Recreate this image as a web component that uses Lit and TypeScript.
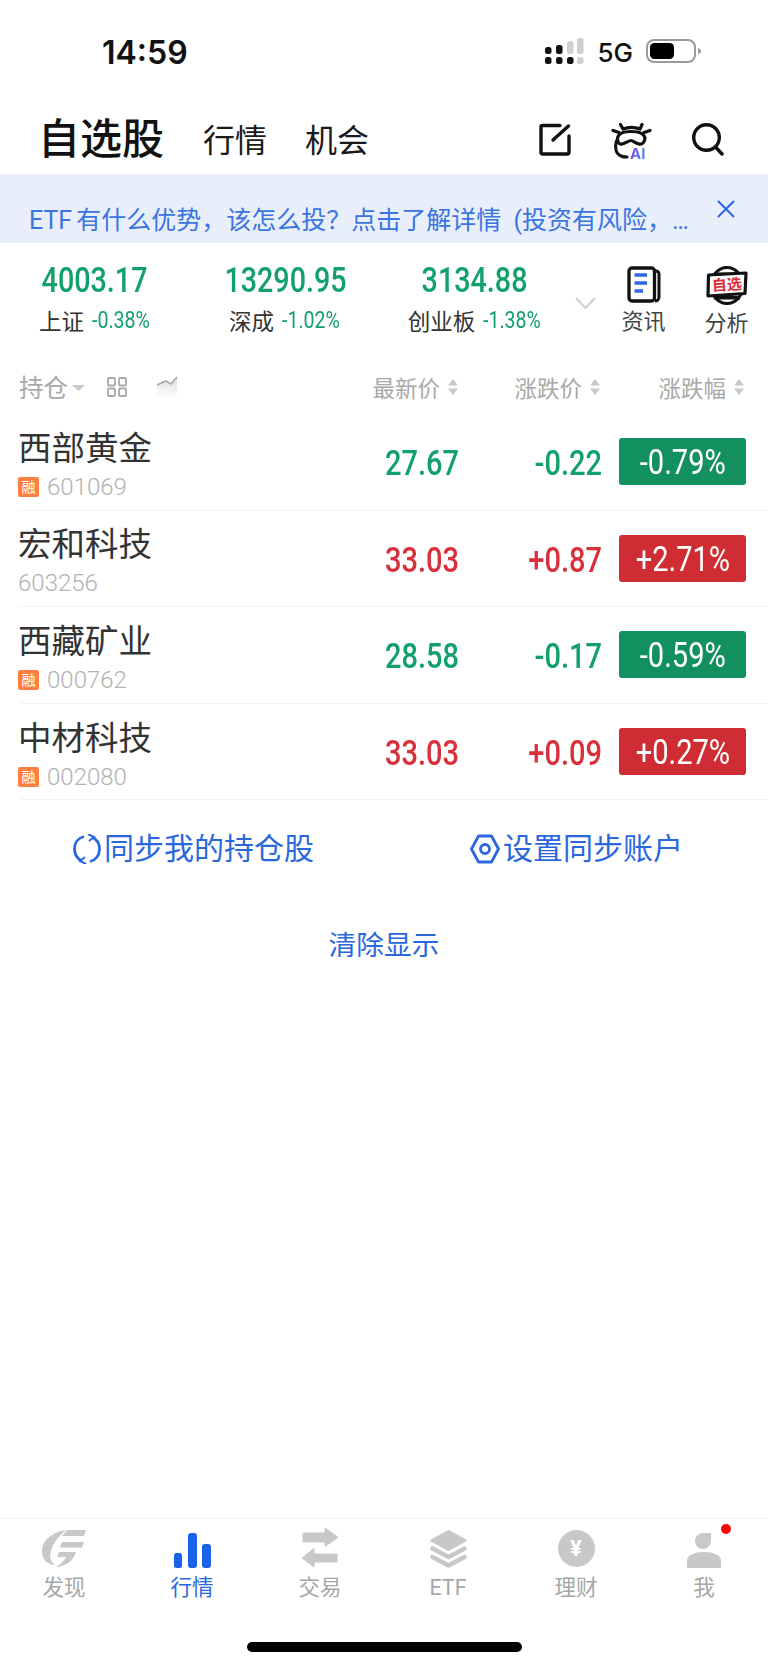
import { LitElement, html, css, svg } from "lit";
import { customElement } from "lit/decorators.js";

const rows = [
  { name: "西部黄金", code: "601069", rong: true, price: "27.67", chg: "-0.22", pct: "-0.79%", up: false },
  { name: "宏和科技", code: "603256", rong: false, price: "33.03", chg: "+0.87", pct: "+2.71%", up: true },
  { name: "西藏矿业", code: "000762", rong: true, price: "28.58", chg: "-0.17", pct: "-0.59%", up: false },
  { name: "中材科技", code: "002080", rong: true, price: "33.03", chg: "+0.09", pct: "+0.27%", up: true },
];

const indices = [
  { v: "4003.17", n: "上证", p: "-0.38%" },
  { v: "13290.95", n: "深成", p: "-1.02%" },
  { v: "3134.88", n: "创业板", p: "-1.38%" },
];

const sortIcon = html`<svg class="sort" width="10" height="16" viewBox="0 0 10 16"><path d="M5 0 10 6.500H0z M5 16 0 9.500H10z" fill="#c9c9c9"/></svg>`;

const tabIcons: Record<string, unknown> = {
  find: svg`<path d="M24 0C10 2 0 11 0 21 0 30 6 35 13 35 9 32 7 27 9 21 11 13 17 6 24 0z" fill="#c8c8c8"/>
    <path d="M25 0H44L42 6H20z M20 12H42L40 17.500H18z M17 22H34C32 30 25 36 14 37 19 34 22 31 24 27H15z" fill="#c8c8c8"/>`,
  quote: svg`<rect x="0" y="20" width="8" height="15" rx="2.500" fill="#1a62e8"/><rect x="14" y="0" width="9" height="35" rx="3" fill="#1a62e8"/><rect x="28" y="11" width="9" height="24" rx="3" fill="#1a62e8"/>`,
  trade: svg`<path d="M1 5H23V0L36 9.300 23 18.500V14H1z M35 26H12V20.500L0 30 12 39V34H35z" fill="#c8c8c8" stroke="#c8c8c8" stroke-width="1" stroke-linejoin="round"/>`,
  etf: svg`<path d="M18.500 1.500 35 10.500 18.500 19.500 2 10.500z" fill="#c8c8c8" stroke="#c8c8c8" stroke-width="3" stroke-linejoin="round"/>
    <path d="M2.500 18.500 18.500 27 34.500 18.500M2.500 27 18.500 35.500 34.500 27" fill="none" stroke="#c8c8c8" stroke-width="4.600" stroke-linecap="round" stroke-linejoin="round"/>`,
  user: svg`<path d="M24 1V9A8 8 0 1 1 16 1z" fill="#c8c8c8"/>
    <path d="M0 36V28C0 23 8 20 17 20S34 23 34 28V36z" fill="#c8c8c8"/>`,
};

const tabs = [
  { k: "find", t: "发现", w: 44, h: 38 },
  { k: "quote", t: "行情", w: 37, h: 35, active: true },
  { k: "trade", t: "交易", w: 36, h: 40 },
  { k: "etf", t: "ETF", w: 37, h: 38 },
  { k: "money", t: "理财", w: 37, h: 37 },
  { k: "user", t: "我", w: 34, h: 36 },
];

@customElement("app-root")
export class AppRoot extends LitElement {
  static styles = css`
    :host {
      display: flex;
      flex-direction: column;
      width: 768px;
      height: 1667px;
      background: #fff;
      font-family: Roboto, "Noto Sans CJK SC", sans-serif;
      color: #222;
      overflow: hidden;
    }
    svg { display: block; flex: none; }

    .status { height: 100px; display: flex; align-items: center; padding: 0 66px 0 102px; box-sizing: border-box; }
    .time { font-family: Inter, sans-serif; font-weight: 600; font-size: 32px; color: #111; line-height: 1; margin-top: 5px; }
    .status-right { margin-left: auto; display: flex; align-items: center; margin-top: 2px; }
    .fiveg { font-family: Inter, sans-serif; font-weight: 500; font-size: 26px; color: #111; margin: 3px 13px 0 13px; line-height: 1; }

    .head { height: 74px; display: flex; align-items: center; padding: 5px 44px 0 38px; box-sizing: border-box; }
    .title { font-size: 42px; font-weight: 500; color: #111; line-height: 1; margin-right: 39px; }
    .tab { font-size: 32px; color: #1a1a1a; line-height: 1; margin: 2px 38px 0 0; }
    .head-icons { margin-left: auto; display: flex; align-items: flex-start; gap: 40px; height: 36px; margin-top: 2px; }

    .banner { height: 69px; background: #e8effb; display: flex; justify-content: space-between; padding: 0 33px 0 29px; box-sizing: border-box; color: #3b74e0; }
    .banner-text { font-size: 25px; line-height: 30px; padding-top: 32px; white-space: nowrap; }
    .banner-etf { margin-right: 4px; }
    .banner-paren { margin-left: 6px; }
    .banner-close { margin-top: 26px; }

    .idx-strip { height: 122px; display: grid; grid-template-columns: 190px 190px 190px 32px 83px 83px; box-sizing: border-box; padding-top: 21px; }
    .idx { display: flex; flex-direction: column; align-items: center; }
    .idx-v { font-size: 35px; font-weight: 500; color: #12a06b; line-height: 34px; transform: scaleX(.82); }
    .idx-l { display: flex; align-items: center; gap: 8px; margin-top: 9px; height: 26px; }
    .idx-n { font-size: 22.500px; color: #333; }
    .idx-p { width: 59px; font-size: 23px; color: #12a06b; white-space: nowrap; transform: scaleX(.85); transform-origin: left center; }
    .chev { padding: 33px 0 0 5px; }
    .tool { display: flex; flex-direction: column; align-items: center; margin-top: 2px; }
    .tool-t { font-size: 22px; color: #444; line-height: 26px; margin-top: 6px; }

    .thead { height: 49px; display: flex; align-items: center; padding: 0 24px 6px 20px; color: #a9a9a9; font-size: 22.500px; box-sizing: border-box; }
    .th-left { display: flex; align-items: center; flex: 1; }
    .th-hold { font-size: 24.500px; margin-left: -1px; }
    .th-tri { margin: 2px 0 0 4px; }
    .th-grid { margin-left: 22px; }
    .th-chart { margin-left: 30px; }
    .th { display: flex; align-items: center; justify-content: flex-end; gap: 8px; }
    .th-w { width: 142px; }
    .th-x { width: 144px; }

    .row { height: 96.600px; margin-left: 20px; border-bottom: 1px solid #f3f3f3; box-sizing: border-box; display: flex; align-items: center; padding-right: 22px; }
    .info { flex: 1; margin: 12px 0 0 -2px; display: flex; flex-direction: column; }
    .name { font-size: 33.500px; line-height: 38px; color: #333; margin-top: -7px; }
    .code-line { display: flex; align-items: center; gap: 8px; margin-top: 7px; height: 24px; }
    .rong { width: 21px; height: 20px; background: #ff8040; color: #fff; font-size: 14px; line-height: 20px; text-align: center; border-radius: 2px; }
    .code { font-size: 24px; color: #b2b2b2; font-weight: 300; line-height: 24px; }
    .price, .chg { font-size: 35px; font-weight: 500; text-align: right; margin-top: 4px; transform: scaleX(.83); transform-origin: right center; }
    .price { width: 100px; }
    .chg { width: 143px; }
    .up { color: #d9303c; }
    .down { color: #12a06b; }
    .badge { width: 127px; height: 47px; margin-left: 17px; border-radius: 3px; color: #fff; font-size: 35px; line-height: 49px; text-align: center; }
    .badge span { display: inline-block; transform: scaleX(.83); }
    .badge.up { background: #cf2d33; color: #fff; }
    .badge.down { background: #12915e; color: #fff; }

    .sync { display: flex; color: #2a67de; font-size: 30px; line-height: 32px; padding: 33px 0 0 73px; }
    .sync-item { display: flex; align-items: center; gap: 3px; }
    .sync-b { margin-left: 156px; }
    .clear { text-align: center; color: #2a67de; font-size: 27.700px; line-height: 32px; margin-top: 65px; }

    .spacer { flex: 1; }
    .tabs { border-top: 1px solid #f2f2f2; display: grid; grid-template-columns: repeat(6, 128px); height: 124px; box-sizing: border-box; }
    .tabitem { display: flex; flex-direction: column; align-items: center; font-size: 21.500px; color: #a6a6a6; }
    .tabitem.active { color: #2a67de; }
    .tab-ic { height: 49px; display: flex; align-items: flex-end; position: relative; }
    .tab-t { line-height: 26px; margin-top: 7px; }
    .dot { position: absolute; right: -10px; top: 5px; width: 10px; height: 10px; border-radius: 50%; background: #f00; }
    .money { position: relative; width: 37px; height: 37px; border-radius: 50%; background: #c8c8c8; color: #fff; font-weight: 700; font-size: 22px; line-height: 37px; text-align: center; margin-bottom: 1px; }
    .home-wrap { height: 25px; display: flex; justify-content: center; }
    .home { width: 275px; height: 10px; border-radius: 5px; background: #000; margin-left: 1px; }

    .ai-wrap { position: relative; width: 41px; height: 36px; }
    .ai { position: absolute; left: 19px; top: 23px; font-family: Inter, sans-serif; font-weight: 700; font-size: 15px; line-height: 15px;
      background: linear-gradient(90deg, #7a4fe8, #4f86f0); -webkit-background-clip: text; background-clip: text; color: transparent; }
    .ana { position: relative; width: 42px; height: 39px; }
    .ana-t { position: absolute; left: 5px; top: 10px; width: 32px; font-size: 15px; line-height: 18px; font-weight: 700; color: #e02c36; text-align: center; transform: rotate(-4deg); white-space: nowrap; }
  `;

  private signal() {
    const d = (x: number, y: number, h: number, c: string) => svg`<rect x=${x} y=${y} width="6.500" height=${h} rx="2.500" fill=${c}/>`;
    return html`<svg width="39" height="27" viewBox="0 0 39 27">
      ${d(0, 9, 7, "#111")}${d(11, 7, 9, "#111")}${d(22, 3, 13, "#d0d0d0")}${d(32, 0, 16, "#d0d0d0")}
      ${d(0, 19, 7, "#111")}${d(11, 19, 7, "#111")}${d(22, 19, 7, "#111")}${d(32, 19, 7, "#d0d0d0")}
    </svg>`;
  }

  private battery() {
    return html`<svg width="56" height="24" viewBox="0 0 56 24">
      <rect x="1" y="1" width="48" height="22" rx="7" fill="none" stroke="#9a9a9a" stroke-width="2"/>
      <rect x="4" y="4" width="24" height="16" rx="4.500" fill="#000"/>
      <path d="M52 9c2 .5 3 1.500 3 3s-1 2.500-3 3z" fill="#9a9a9a"/>
    </svg>`;
  }

  private headIcons() {
    return html`<div class="head-icons">
      <svg width="32" height="33" viewBox="0 0 32 33" fill="none" stroke="#111" stroke-width="3.400" stroke-linecap="round" stroke-linejoin="round">
        <path d="M21 2.500H3.500a1.500 1.500 0 0 0-1.500 1.500V29.500A1.500 1.500 0 0 0 3.500 31H28.500A1.500 1.500 0 0 0 30 29.500V13"/>
        <path d="M14 17 29.500 3"/>
      </svg>
      <div class="ai-wrap">
        <svg width="41" height="36" viewBox="0 0 41 36" fill="none" stroke="#111" stroke-width="3.200" stroke-linecap="round" stroke-linejoin="round">
          <path d="M9.500 1.500 12 6C17 4 24 4 29 6L31 1.500"/>
          <path d="M2 7.500 8 9.500M39 7.500 33 9.500"/>
          <path d="M6.500 15C7.500 10 13 8.500 20 8.500 27 8.500 33 10 34 15 34 19 31 22 28 21 24 20 22 17.500 20 17.500 18 17.500 15 20 11 21 8.500 22 6 19 6.500 15z"/>
          <path d="M5.500 18C3.500 25 5 31 10 33 12 34 14 34 16 34"/>
        </svg>
        <span class="ai">AI</span>
      </div>
      <svg width="32" height="33" viewBox="0 0 32 33" fill="none" stroke="#111" stroke-width="3.400" stroke-linecap="round">
        <circle cx="14.500" cy="14.500" r="12.800"/><path d="M24 24.500 30 31"/>
      </svg>
    </div>`;
  }

  private newsIcon() {
    return html`<svg width="34" height="37" viewBox="0 0 34 37">
      <path d="M27 5h2a3 3 0 0 1 3 3V31a4 4 0 0 1-4 4" fill="none" stroke="#111" stroke-width="3"/>
      <rect x="2" y="2" width="25.500" height="33" rx="3" fill="#fff" stroke="#111" stroke-width="3.300"/>
      <path d="M7.500 9H20M7.500 17H20M7.500 25H16" stroke="#2a67de" stroke-width="3.400" fill="none"/>
    </svg>`;
  }

  private anaIcon() {
    return html`<div class="ana">
      <svg width="42" height="39" viewBox="0 0 42 39">
        <ellipse cx="21" cy="19.500" rx="16" ry="18" fill="#fff" stroke="#111" stroke-width="3"/>
        <path d="M8 6.500H34V9H8zM8 30H34V33.500H8z" fill="#111"/>
        <path d="M2.500 9 40 7 39 27.500 2 30z" fill="#fff" stroke="#111" stroke-width="3.200" stroke-linejoin="round"/>
      </svg>
      <span class="ana-t">自选</span>
    </div>`;
  }

  render() {
    return html`
      <div class="status">
        <span class="time">14:59</span>
        <div class="status-right">${this.signal()}<span class="fiveg">5G</span>${this.battery()}</div>
      </div>

      <div class="head">
        <span class="title">自选股</span>
        <span class="tab">行情</span>
        <span class="tab">机会</span>
        ${this.headIcons()}
      </div>

      <div class="banner">
        <span class="banner-text"><span class="banner-etf">ETF</span>有什么优势，该怎么投？点击了解详情 <span class="banner-paren">(投资有风险，…</span></span>
        <svg class="banner-close" width="18" height="18" viewBox="0 0 18 18"><path d="M1 1 17 17M17 1 1 17" stroke="#2a67de" stroke-width="2" fill="none"/></svg>
      </div>

      <div class="idx-strip">
        ${indices.map(i => html`<div class="idx">
          <span class="idx-v">${i.v}</span>
          <div class="idx-l"><span class="idx-n">${i.n}</span><span class="idx-p">${i.p}</span></div>
        </div>`)}
        <div class="chev"><svg width="21" height="12" viewBox="0 0 21 12"><path d="M1 1 10.500 11 20 1" fill="none" stroke="#cfcfcf" stroke-width="2"/></svg></div>
        <div class="tool">${this.newsIcon()}<span class="tool-t">资讯</span></div>
        <div class="tool">${this.anaIcon()}<span class="tool-t">分析</span></div>
      </div>

      <div class="thead">
        <div class="th-left">
          <span class="th-hold">持仓</span>
          <svg class="th-tri" width="13" height="6" viewBox="0 0 13 6"><path d="M0 0H13L6.500 6z" fill="#c9c9c9"/></svg>
          <svg class="th-grid" width="20" height="20" viewBox="0 0 20 20" fill="none" stroke="#a9a9a9" stroke-width="1.800">
            <rect x="1" y="1" width="7" height="7.500" rx="1"/><rect x="12" y="1" width="7" height="7.500" rx="1"/>
            <rect x="1" y="11.500" width="7" height="7.500" rx="1"/><rect x="12" y="11.500" width="7" height="7.500" rx="1"/>
          </svg>
          <svg class="th-chart" width="21" height="21" viewBox="0 0 21 21">
            <defs><linearGradient id="fade" x1="0" y1="0" x2="0" y2="1"><stop offset="0" stop-color="#dcdcdc"/><stop offset="1" stop-color="#fff"/></linearGradient></defs>
            <path d="M0 9 9 5 14 8 20 1V21H0z" fill="url(#fade)"/>
            <path d="M0 9 9 5 14 8 20 1" fill="none" stroke="#a9a9a9" stroke-width="1.600"/>
          </svg>
        </div>
        <div class="th"><span>最新价</span>${sortIcon}</div>
        <div class="th th-w"><span>涨跌价</span>${sortIcon}</div>
        <div class="th th-x"><span>涨跌幅</span>${sortIcon}</div>
      </div>

      ${rows.map(r => html`<div class="row">
        <div class="info">
          <span class="name">${r.name}</span>
          <div class="code-line">
            ${r.rong ? html`<span class="rong">融</span>` : ""}
            <span class="code">${r.code}</span>
          </div>
        </div>
        <span class="price ${r.up ? "up" : "down"}">${r.price}</span>
        <span class="chg ${r.up ? "up" : "down"}">${r.chg}</span>
        <div class="badge ${r.up ? "up" : "down"}"><span>${r.pct}</span></div>
      </div>`)}

      <div class="sync">
        <div class="sync-item">
          <svg width="28" height="30" viewBox="0 0 28 30" fill="none" stroke="#2a67de" stroke-width="2.800">
            <path d="M11 2.500C5 4 1.500 9 1.500 15S5 25 9 27"/>
            <path d="M17 27.500C23 26 26.500 21 26.500 15S23 5 19 3"/>
            <path d="M15 0 21 3 16 7" stroke-width="2"/><path d="M13 30 7 27 12 23" stroke-width="2"/>
          </svg>
          <span>同步我的持仓股</span>
        </div>
        <div class="sync-item sync-b">
          <svg width="30" height="30" viewBox="0 0 30 30" fill="none" stroke="#2a67de" stroke-width="2.800" stroke-linejoin="round">
            <path d="M8.500 2H21.500L28.500 15 21.500 28H8.500L1.500 15z"/><circle cx="15" cy="15" r="4.500"/>
          </svg>
          <span>设置同步账户</span>
        </div>
      </div>
      <div class="clear">清除显示</div>

      <div class="spacer"></div>

      <div class="tabs">
        ${tabs.map(t => html`<div class="tabitem ${t.active ? "active" : ""}">
          <div class="tab-ic">
            ${t.k === "money"
              ? html`<div class="money">¥</div>`
              : html`<svg width=${t.w} height=${t.h} viewBox="0 0 ${t.w} ${t.h}">${tabIcons[t.k]}</svg>`}
            ${t.k === "user" ? html`<span class="dot"></span>` : ""}
          </div>
          <span class="tab-t">${t.t}</span>
        </div>`)}
      </div>
      <div class="home-wrap"><div class="home"></div></div>
    `;
  }
}
